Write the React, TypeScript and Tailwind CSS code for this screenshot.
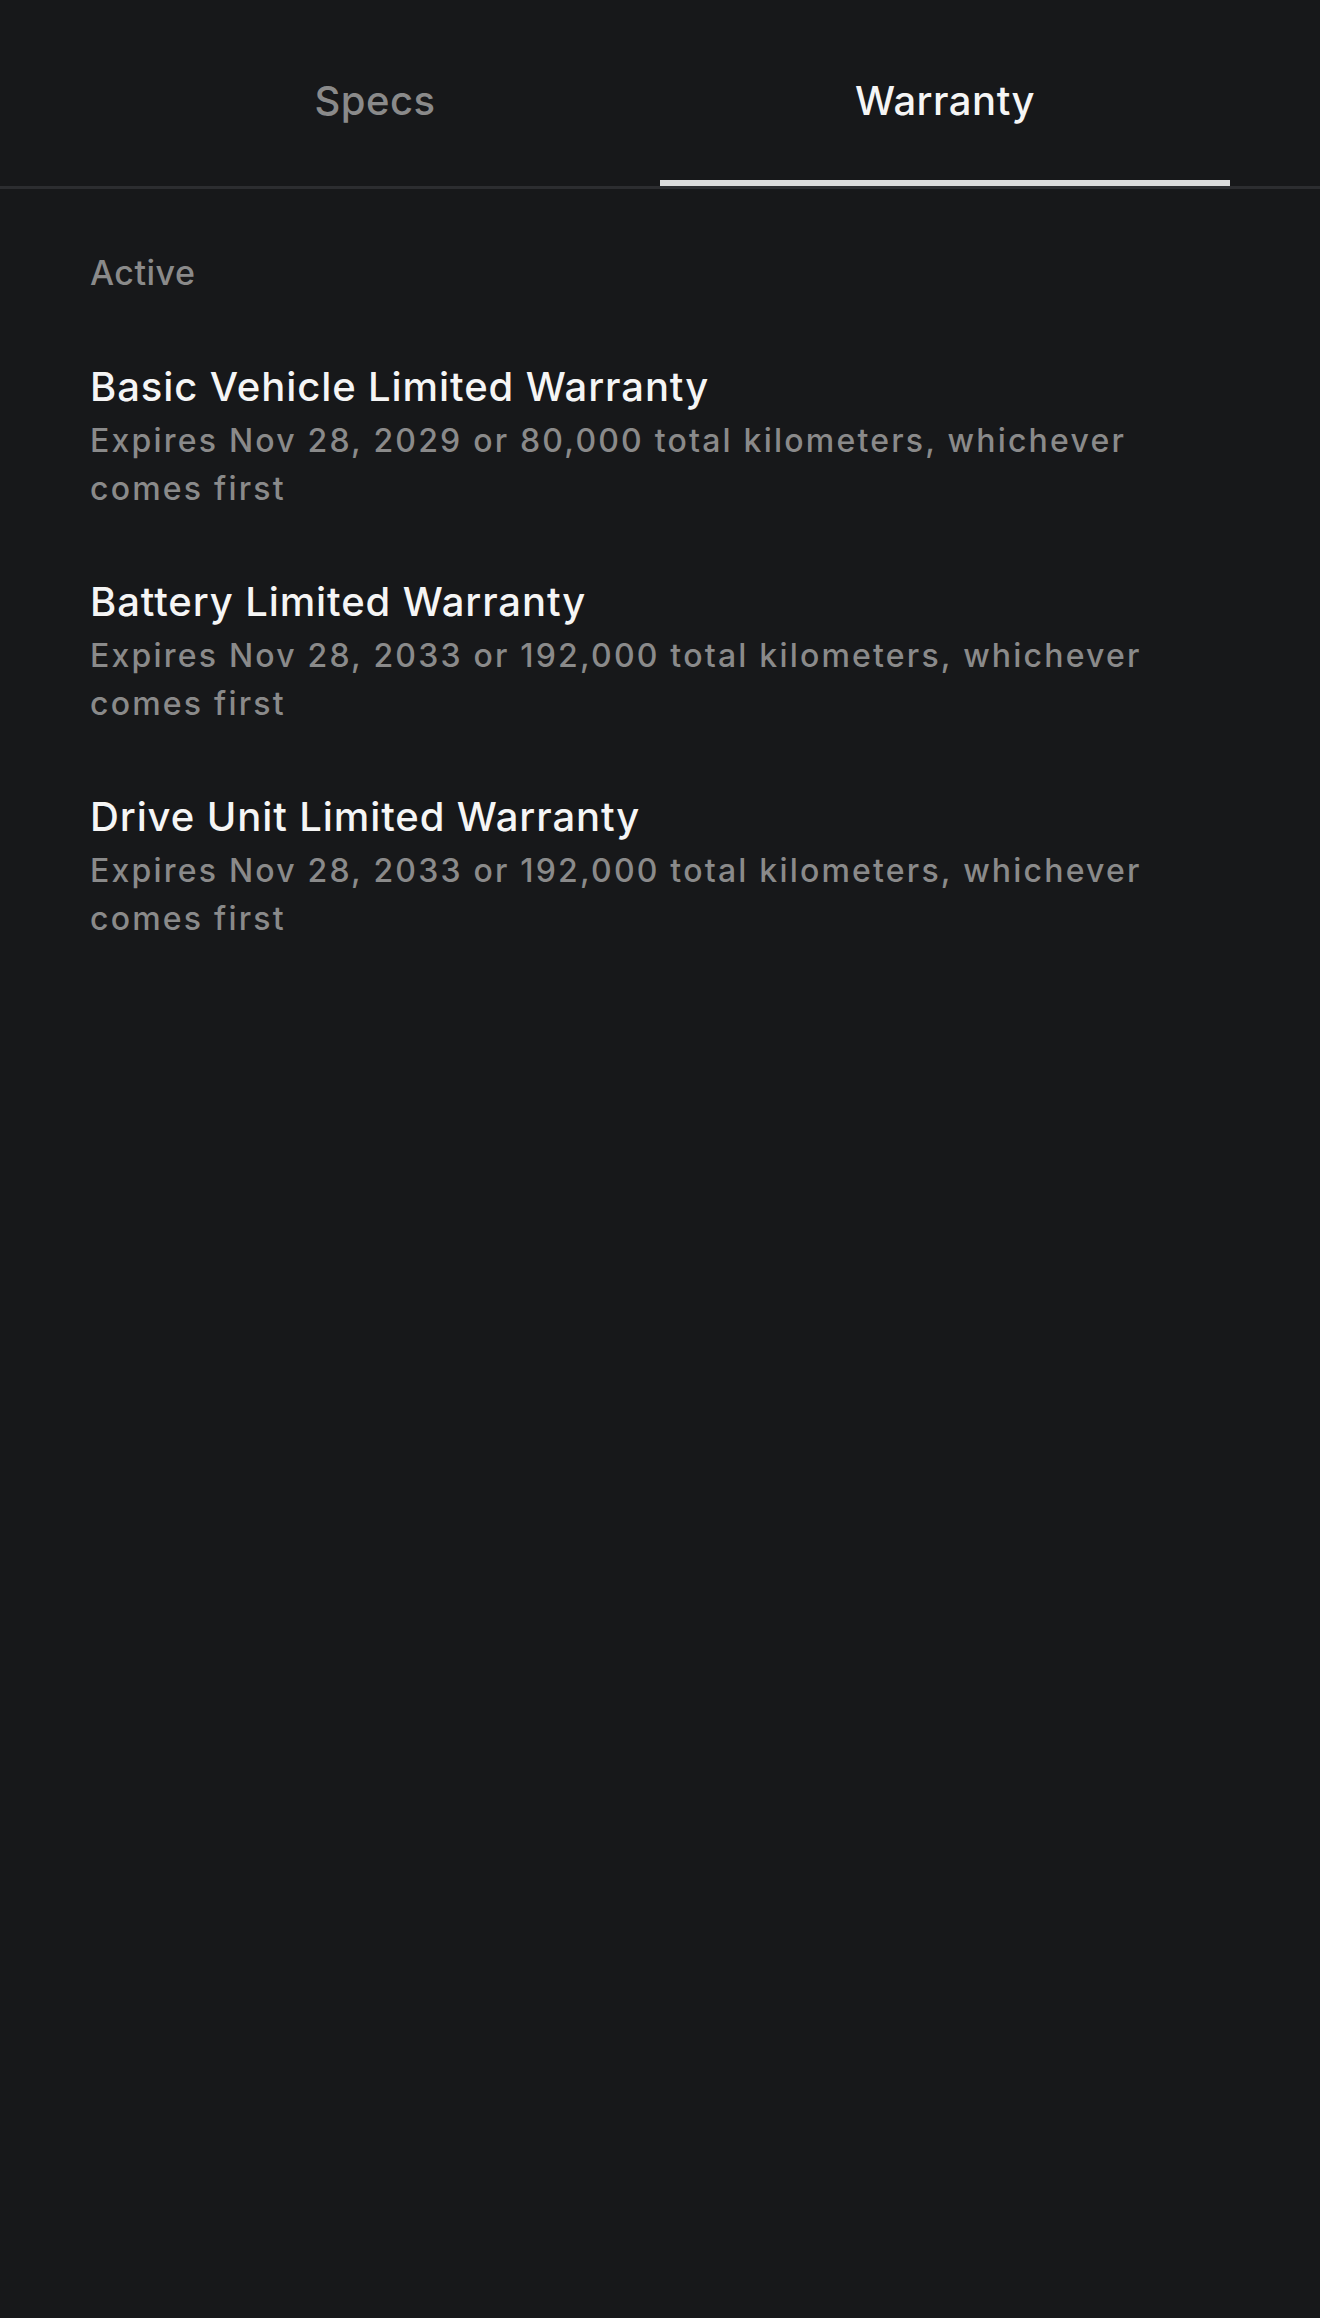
import { useState } from "react";

const warranties = [
  {
    title: "Basic Vehicle Limited Warranty",
    detail: "Expires Nov 28, 2029 or 80,000 total kilometers, whichever comes first",
  },
  {
    title: "Battery Limited Warranty",
    detail: "Expires Nov 28, 2033 or 192,000 total kilometers, whichever comes first",
  },
  {
    title: "Drive Unit Limited Warranty",
    detail: "Expires Nov 28, 2033 or 192,000 total kilometers, whichever comes first",
  },
];

const App = () => {
  const [tab, setTab] = useState("warranty");

  return (
    <div className="min-h-screen bg-[#17181a] font-['Inter',sans-serif] font-medium">
      {/* Tabs */}
      <div className="flex px-[90px] border-b-[3px] border-[#2c2d30]">
        <button
          onClick={() => setTab("specs")}
          className={`flex-1 flex justify-center items-start h-[186px] pt-[77px] text-[40px] leading-[48px] tracking-[0.5px] border-b-[6px] ${
            tab === "specs" ? "border-[#dcdcdc] text-[#f5f5f5]" : "border-transparent text-[#8a8a8a]"
          }`}
        >
          Specs
        </button>
        <button
          onClick={() => setTab("warranty")}
          className={`flex-1 flex justify-center items-start h-[186px] pt-[77px] text-[40px] leading-[48px] tracking-[0.5px] border-b-[6px] ${
            tab === "warranty" ? "border-[#dcdcdc] text-[#f5f5f5]" : "border-transparent text-[#8a8a8a]"
          }`}
        >
          Warranty
        </button>
      </div>

      {/* Warranty list */}
      <div className="px-[90px] pt-[62px]">
        <div className="text-[34px] leading-[44px] tracking-[0.5px] text-[#8a8a8a]">Active</div>
        <div className="flex flex-col gap-[61px] mt-[64px]">
          {warranties.map((w) => (
            <div key={w.title}>
              <div className="text-[40px] leading-[56px] tracking-[0.9px] text-[#f5f5f5]">{w.title}</div>
              <div className="mt-[2px] text-[32px] leading-[48px] tracking-[2.2px] text-[#8a8a8a]">{w.detail}</div>
            </div>
          ))}
        </div>
      </div>
    </div>
  );
};

export default App;
